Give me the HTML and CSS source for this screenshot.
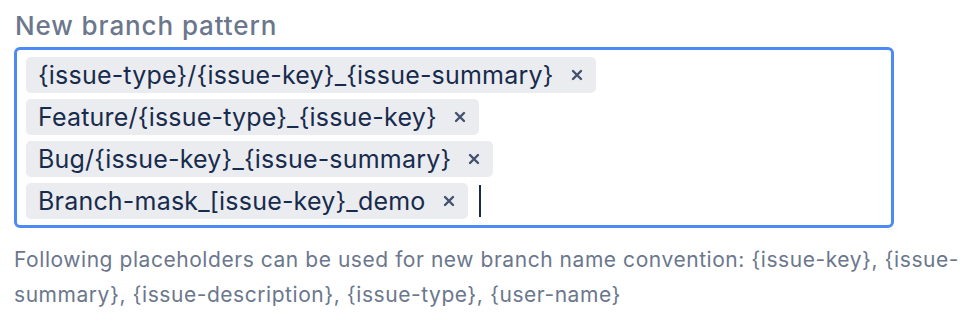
FILE: index.html
```html
<!DOCTYPE html>
<html>
<head>
<meta charset="utf-8">
<link rel="stylesheet" href="styles.css">
</head>
<body>
<div class="field">
  <label class="label">New branch pattern</label>
  <div class="box">
    <div class="tag"><span class="tag-text">{issue-type}/{issue-key}_{issue-summary}</span><span class="tag-x"><svg viewBox="0 0 12 12" width="12" height="12"><path d="M2 2 L10 10 M10 2 L2 10" stroke="#42526E" stroke-width="2.4" stroke-linecap="round"/></svg></span></div>
    <div class="tag"><span class="tag-text">Feature/{issue-type}_{issue-key}</span><span class="tag-x"><svg viewBox="0 0 12 12" width="12" height="12"><path d="M2 2 L10 10 M10 2 L2 10" stroke="#42526E" stroke-width="2.4" stroke-linecap="round"/></svg></span></div>
    <div class="tag"><span class="tag-text">Bug/{issue-key}_{issue-summary}</span><span class="tag-x"><svg viewBox="0 0 12 12" width="12" height="12"><path d="M2 2 L10 10 M10 2 L2 10" stroke="#42526E" stroke-width="2.4" stroke-linecap="round"/></svg></span></div>
    <div class="last-row">
      <div class="tag"><span class="tag-text">Branch-mask_[issue-key}_demo</span><span class="tag-x"><svg viewBox="0 0 12 12" width="12" height="12"><path d="M2 2 L10 10 M10 2 L2 10" stroke="#42526E" stroke-width="2.4" stroke-linecap="round"/></svg></span></div>
      <span class="cursor"></span>
    </div>
  </div>
  <p class="help">Following placeholders can be used for new branch name convention: {issue-key}, {issue-summary}, {issue-description}, {issue-type}, {user-name}</p>
</div>
</body>
</html>
```
FILE: styles.css
```css
html, body {
  margin: 0;
  padding: 0;
  background: #ffffff;
}
body {
  font-family: Inter, "Noto Sans", sans-serif;
}
.field {
  padding: 8px 0 0 14px;
  width: 950px;
}
.label {
  display: block;
  font-size: 26px;
  font-weight: 500;
  letter-spacing: 0.9px;
  color: #6B778C;
  line-height: 36px;
  margin-left: 1px;
  margin-bottom: 3px;
}
.box {
  box-sizing: border-box;
  width: 880px;
  height: 181px;
  border: 3px solid #4C8BF5;
  border-radius: 6px;
  padding: 7px 9px 6px 9px;
  display: flex;
  flex-direction: column;
  align-items: flex-start;
  gap: 6px;
}
.tag {
  display: inline-flex;
  align-items: center;
  height: 36px;
  background: #EBECF0;
  border-radius: 5px;
  padding: 0 13px 0 12px;
  color: #172B4D;
  font-size: 25px;
}
.tag-text {
  line-height: 36px;
  letter-spacing: 0.2px;
}
.tag-x {
  display: flex;
  margin-left: 17px;
}
.last-row {
  display: flex;
  align-items: center;
  gap: 11px;
}
.cursor {
  display: block;
  width: 2px;
  height: 32px;
  background: #172B4D;
}
.help {
  margin: 14px 0 0 0;
  font-size: 21px;
  line-height: 35px;
  letter-spacing: 0.55px;
  color: #6B778C;
}
```
